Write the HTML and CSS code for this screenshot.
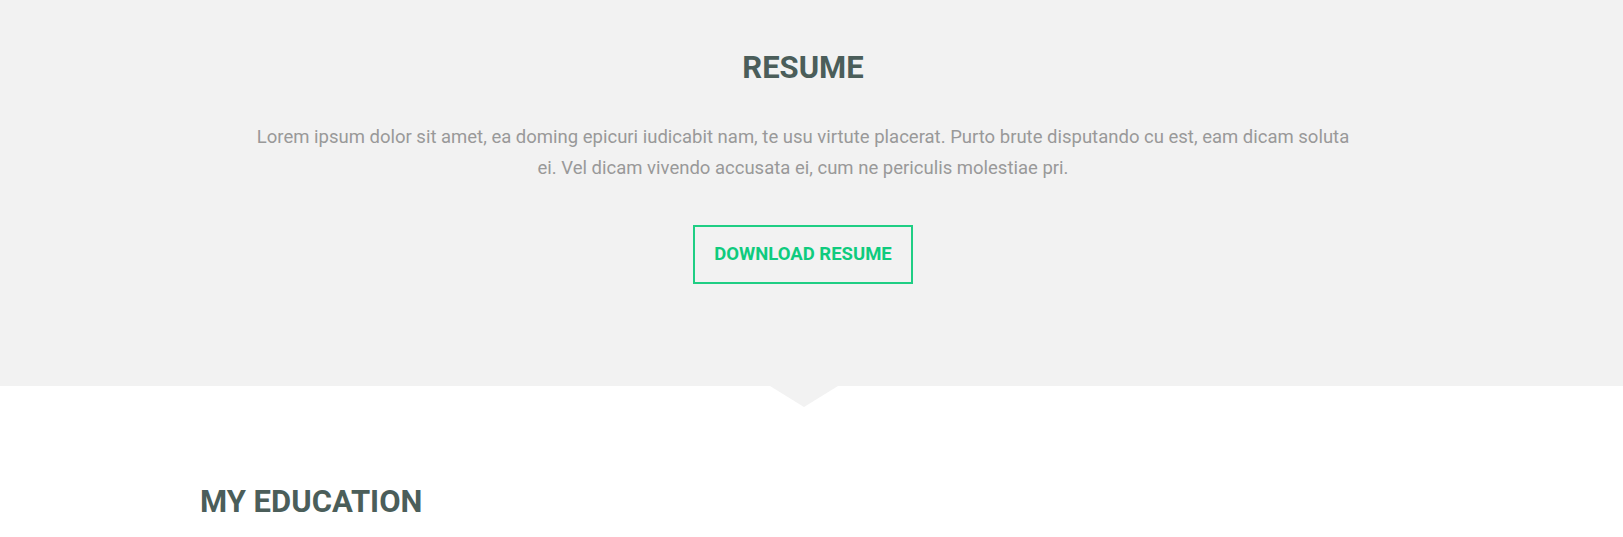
FILE: index.html
```html
<!DOCTYPE html>
<html lang="en">
<head>
    <meta charset="UTF-8">
    <title>Resume</title>
    <link rel="stylesheet" href="styles.css">
</head>
<body>
<section class="resume">
    <div class="container">
        <h2 class="title">RESUME</h2>
        <p class="intro">Lorem ipsum dolor sit amet, ea doming epicuri iudicabit nam, te usu virtute placerat. Purto brute disputando cu est, eam dicam soluta ei. Vel dicam vivendo accusata ei, cum ne periculis molestiae pri.</p>
        <a class="btn" href="#">DOWNLOAD RESUME</a>
    </div>
</section>
<section class="education">
    <div class="container">
        <h2 class="heading">MY EDUCATION</h2>
    </div>
</section>
</body>
</html>
```

FILE: styles.css
```css
* {
    box-sizing: border-box;
}

html, body {
    margin: 0;
    padding: 0;
}

body {
    font-family: Roboto, "Liberation Sans", Arial, sans-serif;
    background: #fff;
}

section {
    padding-right: 17px;
}

.container {
    width: 1206px;
    margin: 0 auto;
}

.resume {
    position: relative;
    background: #f2f2f2;
    padding-top: 50px;
    padding-bottom: 102px;
    text-align: center;
}

.resume::after {
    content: "";
    position: absolute;
    left: calc(50% - 8px);
    bottom: -21px;
    margin-left: -34px;
    border-left: 34px solid transparent;
    border-right: 34px solid transparent;
    border-top: 21px solid #f2f2f2;
}

.title, .heading {
    margin: 0;
    font-size: 31px;
    line-height: 36px;
    font-weight: 700;
    color: #4b5e5a;
}

.intro {
    max-width: 1100px;
    margin: 36px auto 0;
    font-size: 18.5px;
    line-height: 31px;
    color: #999;
}

.btn {
    display: inline-block;
    margin-top: 41px;
    padding: 17px 19px;
    border: 2px solid #1fce84;
    color: #0fcb7e;
    font-size: 18.5px;
    line-height: 21px;
    font-weight: 700;
    text-decoration: none;
}

.education {
    padding-top: 98px;
}
```
